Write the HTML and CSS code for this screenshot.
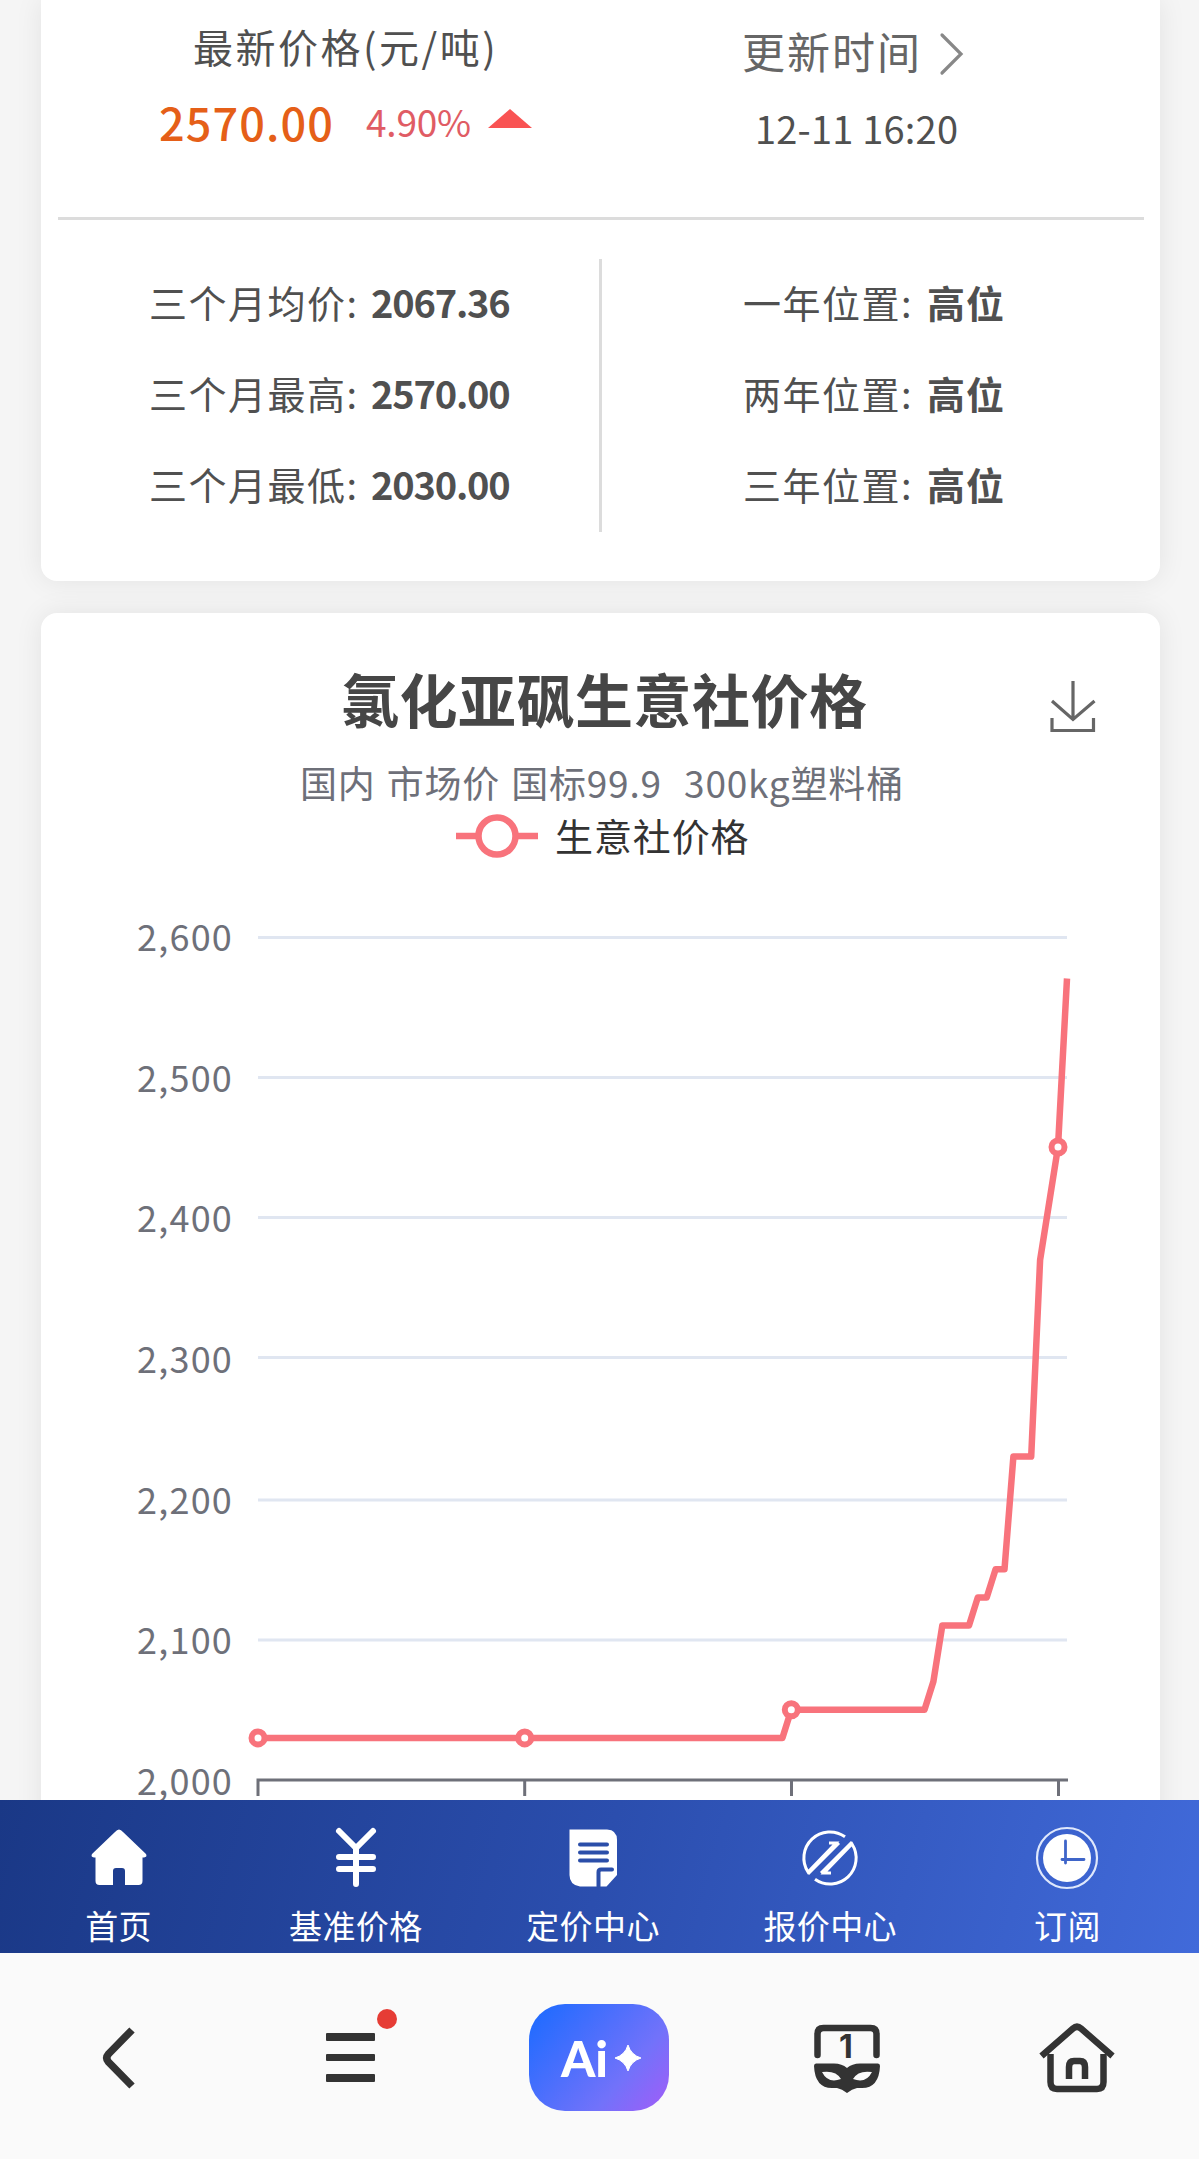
FILE: index.html
```
<!DOCTYPE html>
<html lang="zh-CN">
<head>
<meta charset="utf-8">
<title>氯化亚砜生意社价格</title>
<link rel="stylesheet" href="styles.css">
</head>
<body>
<main class="content">
  <section class="card summary">
    <div class="quote">
      <div class="quote-price">
        <div class="price-label">最新价格(元/吨)</div>
        <div class="price-row"><span class="price">2570.00</span><span class="change">4.90%</span><svg class="up" width="44" height="19" viewBox="0 0 44 19"><path d="M0 19L22 0L44 19Z" fill="#f95353"/></svg></div>
      </div>
      <div class="quote-time">
        <div class="time-label">更新时间<svg width="26" height="44" viewBox="0 0 26 44"><path d="M3 3L22 22L3 41" fill="none" stroke="#888" stroke-width="3.2" stroke-linecap="round"/></svg></div>
        <div class="time">12-11 16:20</div>
      </div>
    </div>
    <div class="stats">
      <div class="stats-left">
        <div class="stat"><span>三个月均价:</span><b>2067.36</b></div>
        <div class="stat"><span>三个月最高:</span><b>2570.00</b></div>
        <div class="stat"><span>三个月最低:</span><b>2030.00</b></div>
      </div>
      <div class="stats-rule"></div>
      <div class="stats-right">
        <div class="stat"><span>一年位置:</span><b>高位</b></div>
        <div class="stat"><span>两年位置:</span><b>高位</b></div>
        <div class="stat"><span>三年位置:</span><b>高位</b></div>
      </div>
    </div>
  </section>

  <section class="card chart-card">
    <header class="chart-head">
      <h1>氯化亚砜生意社价格</h1>
      <svg class="download" width="46" height="52" viewBox="0 0 46 52" fill="none" stroke="#666" stroke-width="3.2"><path d="M23 0V38M2 20L23 38.500L44.500 20M2 37V49.500H43.500V37"/></svg>
    </header>
    <p class="subtitle">国内 市场价 国标99.9  300kg塑料桶</p>
    <div class="legend">
      <svg width="82" height="46" viewBox="0 0 82 46" stroke="#f8737c" stroke-width="6.500"><path d="M0 23H82"/><circle cx="41" cy="23" r="18.500" fill="#fff"/></svg>
      <span>生意社价格</span>
    </div>
    <svg class="plot" width="1119" height="920" viewBox="41 880 1119 920">
      <g stroke="#e0e6f1" stroke-width="3"><path d="M258 937.500H1067M258 1077.500H1067M258 1217.500H1067M258 1357.500H1067M258 1500H1067M258 1640H1067"/></g>
      <g class="ticks">
        <text x="233" y="951">2,600</text>
        <text x="233" y="1092">2,500</text>
        <text x="233" y="1232">2,400</text>
        <text x="233" y="1373">2,300</text>
        <text x="233" y="1514">2,200</text>
        <text x="233" y="1654">2,100</text>
        <text x="233" y="1795">2,000</text>
      </g>
      <path d="M256.500 1780H1068M258 1780V1796M524.700 1780V1796M791.500 1780V1796M1058.500 1780V1796" fill="none" stroke="#6e7079" stroke-width="3"/>
      <path d="M258 1737.900H782.400L791.300 1709.700H924.500L933.400 1681.600L942.300 1625.500H969L977.800 1597.400H986.700L995.600 1569.300H1004.500L1013.400 1456.500H1031.200L1040.100 1260L1058 1147L1067 978.500" fill="none" stroke="#f8737c" stroke-width="6.500" stroke-linejoin="round"/>
      <g fill="#fff" stroke="#f8737c" stroke-width="6"><circle cx="258" cy="1737.900" r="6.500"/><circle cx="524.700" cy="1737.900" r="6.500"/><circle cx="791.300" cy="1709.700" r="6.500"/><circle cx="1058" cy="1147" r="6.500"/></g>
    </svg>
  </section>
</main>

<nav class="tabs">
  <a class="tab"><svg width="64" height="64" viewBox="0 0 64 64"><path d="M32 3.500Q34 3.500 36 6L59 28Q60.500 31 57 31.500H55.500V55Q55.500 59 51.500 59H38V45Q38 42 35 42H29Q26 42 26 45V59H12.500Q8.500 59 8.500 55V31.500H7Q3.500 31 5 28L28 6Q30 3.500 32 3.500Z" fill="#fff"/></svg><span>首页</span></a>
  <a class="tab"><svg width="64" height="64" viewBox="0 0 64 64" fill="none" stroke="#fff" stroke-width="6" stroke-linecap="round"><path d="M15 5L32 22L49 5M32 22V58M15 31H49M15 43H49"/></svg><span>基准价格</span></a>
  <a class="tab"><svg width="64" height="64" viewBox="0 0 64 64"><path d="M8.500 3.500H46Q56 4 56 14V49L45.500 60.500H19Q8.500 59 8.500 49Z" fill="#fff"/><path d="M19 18.500H46M19 26.500H46M19 34.500H46M37.500 60.500V46Q37.500 43.500 40 43.500H51" fill="none" stroke="#2b4ea9" stroke-width="4" stroke-linecap="round"/></svg><span>定价中心</span></a>
  <a class="tab"><svg width="64" height="64" viewBox="0 0 64 64" fill="none" stroke="#fff" stroke-width="3"><path d="M47 10.800A26 26 0 0 0 10 46L38 17H31M17 53.200A26 26 0 0 0 54 18L26 47H33M41 17L10 48M23 47L54 16"/></svg><span>报价中心</span></a>
  <a class="tab"><svg width="64" height="64" viewBox="0 0 64 64"><circle cx="32" cy="32" r="30" fill="none" stroke="#dfe8fc" stroke-width="2.200"/><circle cx="32" cy="32" r="24" fill="#fff"/><path d="M30.500 15V37M27 33.500H49" fill="none" stroke="#3f65c9" stroke-width="2.800" stroke-linecap="round"/></svg><span>订阅</span></a>
</nav>

<footer class="browser-bar">
  <svg class="back" width="40" height="64" viewBox="0 0 40 64"><path d="M33 4L9.500 28Q6 32 9.500 36L33 60" fill="none" stroke="#333" stroke-width="7.500"/></svg>
  <div class="menu"><i></i><i></i><i></i><em class="dot"></em></div>
  <div class="ai"><span>Ai</span><svg width="26" height="26" viewBox="0 0 26 26"><path d="M13 0Q16 10 26 13Q16 16 13 26Q10 16 0 13Q10 10 13 0Z" fill="#fff" stroke="#fff"/></svg></div>
  <svg class="windows" width="66" height="70" viewBox="0 0 66 70"><path d="M3.500 31V10Q3.500 4 9.500 4H56.500Q62.500 4 62.500 10V31" fill="none" stroke="#333" stroke-width="6.500" stroke-linecap="round"/><text x="32" y="33.500">1</text><path d="M2 39.500H20Q28 39.500 33 44Q38 39.500 46 39.500H64Q66 39.500 66 42Q65 64 48 64H43Q38 65 33 69Q28 65 23 64H18Q1 64 0 42Q0 39.500 2 39.500Z" fill="#333"/><path d="M8 48Q22 46 27 55Q14 60 8 48ZM58 48Q44 46 39 55Q52 60 58 48Z" fill="#fafafa"/></svg>
  <svg class="home" width="78" height="72" viewBox="0 0 78 72" fill="none" stroke="#333" stroke-width="6.500"><path d="M3.500 33L35 5.500Q39 2 43 5.500L74.500 33"/><path d="M12.500 31V59Q12.500 66 19 66H59Q65.500 66 65.500 59V31"/><path d="M31 56V44Q31 38 36 38H42Q47 38 47 44V56"/></svg>
</footer>
</body>
</html>
```
FILE: styles.css
```
* { box-sizing: border-box; }

body {
  margin: 0;
  width: 1199px;
  height: 2159px;
  overflow: hidden;
  background: #f5f5f5;
  font-family: "Noto Sans CJK SC", sans-serif;
  color: #505050;
}

svg { display: block; flex: none; overflow: visible; }

.content {
  height: 1800px;
  overflow: hidden;
  padding: 0 39px 0 41px;
}

.card {
  background: #fff;
  box-shadow: 0 0 28px rgba(0, 0, 0, .08);
}

.summary {
  height: 581px;
  border-radius: 0 0 16px 16px;
}

.quote {
  display: grid;
  grid-template-columns: 560px 1fr;
  height: 220px;
  margin: 0 16px 0 17px;
  border-bottom: 3px solid #dcdcdc;
}

.quote-price { padding: 16px 0 0 101px; }

.price-label {
  padding-left: 34px;
  font-size: 40px;
  line-height: 60px;
  letter-spacing: 2.5px;
}

.price-row {
  display: flex;
  align-items: center;
  height: 60px;
  margin-top: 15px;
}

.price { font-size: 45px; font-weight: 500; letter-spacing: 1.100px; color: #e55f18; }

.change { margin-left: 32px; font-size: 37px; color: #e05c64; letter-spacing: -.2px; }

.up { margin: -6px 0 0 17px; }

.quote-time { padding: 20px 0 0 124px; }

.time-label {
  display: flex;
  align-items: center;
  gap: 17px;
  font-size: 43px;
  line-height: 60px;
  letter-spacing: 2px;
  color: #666;
}

.time-label svg { margin-top: 7px; }

.time {
  padding-left: 13px;
  margin-top: 18px;
  font-size: 38px;
  line-height: 60px;
  letter-spacing: .2px;
}

.stats {
  display: grid;
  grid-template-columns: 558px 3px 1fr;
  padding-top: 37px;
}

.stats-left { padding-left: 108px; }
.stats-right { padding-left: 141px; }
.stats-rule { height: 273px; margin-top: 2px; background: #dcdcdc; }

.stat {
  display: flex;
  height: 91px;
  font-size: 38px;
  line-height: 89px;
  letter-spacing: 1.5px;
}

.stats-left span { width: 222px; }
.stats-right span { width: 184px; }
.stat b { letter-spacing: 1px; }
.stats-left b { letter-spacing: -1.2px; }

.chart-card {
  height: 1300px;
  margin-top: 32px;
  border-radius: 16px 16px 0 0;
}

.chart-head {
  display: flex;
  justify-content: space-between;
  padding: 50px 64px 0 300px;
}

h1 {
  margin: 0;
  font-size: 58px;
  line-height: 70px;
  font-weight: 700;
  letter-spacing: .5px;
  color: #464646;
}

.download { margin-top: 18px; }

.subtitle {
  margin: 19px 0 0;
  padding-left: 259px;
  font-size: 37px;
  line-height: 60px;
  letter-spacing: .8px;
  word-spacing: 2px;
  white-space: pre;
  color: #6e7079;
}

.legend {
  display: flex;
  align-items: center;
  gap: 17px;
  height: 46px;
  margin-top: 1px;
  padding-left: 415px;
  font-size: 38px;
  letter-spacing: .9px;
  color: #333;
}

.legend span { margin-top: -4px; }

.plot { margin-top: 21px; }

.ticks text {
  font-size: 36px;
  letter-spacing: 1.2px;
  text-anchor: end;
  fill: #6e7079;
}

.tabs {
  display: grid;
  grid-template-columns: repeat(5, 1fr);
  height: 153px;
  padding: 26px 13px 0 0;
  background: linear-gradient(105deg, #1a3886 0%, #2b4eae 50%, #416ada 100%);
}

.tab {
  display: flex;
  flex-direction: column;
  align-items: center;
  font-size: 33px;
  line-height: 50px;
  color: #fff;
}

.tab span { margin-top: 10px; letter-spacing: .4px; }

.browser-bar {
  display: flex;
  align-items: flex-start;
  height: 206px;
  background: #fafafa;
}

.back { margin: 73px 0 0 99px; }

.menu {
  position: relative;
  display: flex;
  flex-direction: column;
  gap: 13px;
  width: 49px;
  margin: 80px 0 0 187px;
}

.menu i { height: 7.700px; border-radius: 1px; background: #333; }

.dot {
  position: absolute;
  top: -24px;
  left: 51px;
  width: 20px;
  height: 20px;
  border-radius: 50%;
  background: #e63c35;
}

.ai {
  display: flex;
  align-items: center;
  justify-content: center;
  gap: 7px;
  width: 140px;
  height: 107px;
  padding-left: 4px;
  margin: 51px 0 0 154px;
  border-radius: 36px;
  background: linear-gradient(130deg, #1f6bff 5%, #7272fa 68%, #a25cf8 100%);
  color: #fff;
  font-family: Lato, sans-serif;
  font-size: 49px;
  font-weight: 900;
  line-height: 50px;
}

.windows { margin: 71px 0 0 145px; }

.windows text {
  font-family: Inter, sans-serif;
  font-size: 32px;
  font-weight: 700;
  text-anchor: middle;
  fill: #333;
}

.home { margin: 70px 0 0 158px; }
```
